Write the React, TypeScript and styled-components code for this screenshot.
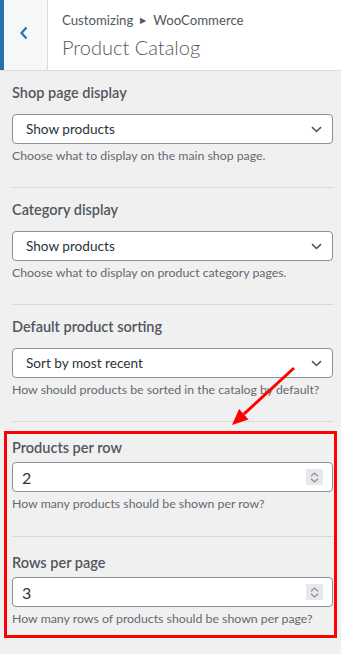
import React from 'react';
import styled, { createGlobalStyle } from 'styled-components';

const GlobalStyle = createGlobalStyle`
  html, body {
    margin: 0;
    padding: 0;
    background: #f0f0f1;
  }
  body {
    font-family: Lato, "Noto Sans", sans-serif;
    color: #50575e;
  }
  * {
    box-sizing: border-box;
  }
`;

const Panel = styled.div`
  position: relative;
  width: 341px;
  min-height: 654px;
  background: #f0f0f1;
`;

// header bar
const Header = styled.header`
  display: flex;
  height: 71px;
  background: #fff;
  border-bottom: 1px solid #dcdcde;
`;

const BackButton = styled.button`
  display: flex;
  align-items: center;
  justify-content: center;
  width: 48px;
  height: 100%;
  padding: 0 4px 4px 0;
  margin: 0;
  background: #f6f7f7;
  border: none;
  border-left: 4px solid #2271b1;
  border-right: 1px solid #dcdcde;
  color: #2271b1;
  cursor: pointer;
`;

const HeaderTitle = styled.div`
  display: flex;
  flex-direction: column;
  padding: 10px 0 0 14px;
`;

const Breadcrumb = styled.span`
  font-size: 13.2px;
  line-height: 20px;
  color: #50575e;
`;

const Crumb = styled.span`
  display: inline-block;
  margin: 0 7px;
  font-size: 8px;
  vertical-align: 2px;
`;

const PageTitle = styled.h1`
  margin: 4px 0 0;
  font-size: 20px;
  line-height: 26px;
  font-weight: 300;
  color: #50575e;
`;

// controls
const Section = styled.div<{ $tight?: boolean; $last?: boolean }>`
  display: flex;
  flex-direction: column;
  padding: ${p => (p.$tight ? '16px' : '12px')} 8px ${p => (p.$last ? '10px' : p.$tight ? '23px' : '22px')} 12px;
`;

const Separator = styled.hr`
  margin: 0 8px 0 12px;
  border: none;
  border-top: 1px dotted #c3c4c7;
`;

const Label = styled.label<{ $tight?: boolean }>`
  font-size: 14.5px;
  line-height: 20px;
  font-weight: 600;
  color: #50575e;
  margin-bottom: ${p => (p.$tight ? '4px' : '11px')};
`;

const FieldBox = styled.div`
  position: relative;
  display: flex;
  align-items: center;
  height: 30px;
  padding: 0 10px 0 13px;
  background: #fff;
  border: 1px solid #8c8f94;
  border-radius: 4px;
  color: #2c3338;
`;

const FieldText = styled.span<{ $number?: boolean }>`
  flex: 1;
  font-size: ${p => (p.$number ? '16px' : '13.6px')};
  margin-left: ${p => (p.$number ? '-4px' : '0')};
`;

const Spinner = styled.span`
  display: flex;
  flex-direction: column;
  align-items: center;
  justify-content: center;
  gap: 1px;
  width: 17px;
  height: 16px;
  margin-right: -1px;
  background: #e8e8ec;
  color: #8c8f94;
`;

const Description = styled.span`
  margin-top: 3px;
  font-size: 12.3px;
  line-height: 18px;
  color: #646970;
  white-space: nowrap;
`;

const Highlight = styled.div`
  position: relative;
  &::after {
    content: '';
    position: absolute;
    top: 9px;
    bottom: 0;
    left: 4px;
    right: 4px;
    border: 3px solid #ff0000;
    pointer-events: none;
  }
`;

const Arrow = styled.svg`
  position: absolute;
  left: 225px;
  top: 360px;
  width: 75px;
  height: 70px;
  pointer-events: none;
`;

const Chevron = () => (
  <svg width="11" height="7" viewBox="0 0 11 7">
    <path d="M1 1.2l4.5 4.3L10 1.2" fill="none" stroke="#50575e" strokeWidth="1.6" />
  </svg>
);

const SpinIcons = () => (
  <Spinner>
    <svg width="9" height="5" viewBox="0 0 9 5">
      <path d="M1 4.2L4.5 1 8 4.2" fill="none" stroke="currentColor" strokeWidth="1.2" />
    </svg>
    <svg width="9" height="5" viewBox="0 0 9 5">
      <path d="M1 0.8L4.5 4 8 0.8" fill="none" stroke="currentColor" strokeWidth="1.2" />
    </svg>
  </Spinner>
);

interface ControlProps {
  label: string;
  value: string;
  description: string;
  number?: boolean;
  last?: boolean;
}

const Control: React.FC<ControlProps> = ({ label, value, description, number, last }) => (
  <Section $tight={number} $last={last}>
    <Label $tight={number}>{label}</Label>
    <FieldBox>
      <FieldText $number={number}>{value}</FieldText>
      {number ? <SpinIcons /> : <Chevron />}
    </FieldBox>
    <Description>{description}</Description>
  </Section>
);

const App: React.FC = () => {
  return (
    <Panel>
      <GlobalStyle />
      <Header>
        <BackButton aria-label="Back">
          <svg width="10" height="14" viewBox="0 0 10 14">
            <path d="M7.5 1.5L2.5 7l5 5.5" fill="none" stroke="#2271b1" strokeWidth="2.2" />
          </svg>
        </BackButton>
        <HeaderTitle>
          <Breadcrumb>
            Customizing<Crumb>▶</Crumb>WooCommerce
          </Breadcrumb>
          <PageTitle>Product Catalog</PageTitle>
        </HeaderTitle>
      </Header>

      <Control
        label="Shop page display"
        value="Show products"
        description="Choose what to display on the main shop page."
      />
      <Separator />
      <Control
        label="Category display"
        value="Show products"
        description="Choose what to display on product category pages."
      />
      <Separator />
      <Control
        label="Default product sorting"
        value="Sort by most recent"
        description="How should products be sorted in the catalog by default?"
      />
      <Separator />
      <Highlight>
        <Control
          number
          label="Products per row"
          value="2"
          description="How many products should be shown per row?"
        />
        <Separator />
        <Control
          number
          last
          label="Rows per page"
          value="3"
          description="How many rows of products should be shown per page?"
        />
      </Highlight>

      <Arrow viewBox="0 0 75 70">
        <line x1="69" y1="8" x2="18.8" y2="54.2" stroke="#ff0000" strokeWidth="3" />
        <polygon points="7,65 23.5,59.4 14.1,49" fill="#ff0000" />
      </Arrow>
    </Panel>
  );
};

export default App;
